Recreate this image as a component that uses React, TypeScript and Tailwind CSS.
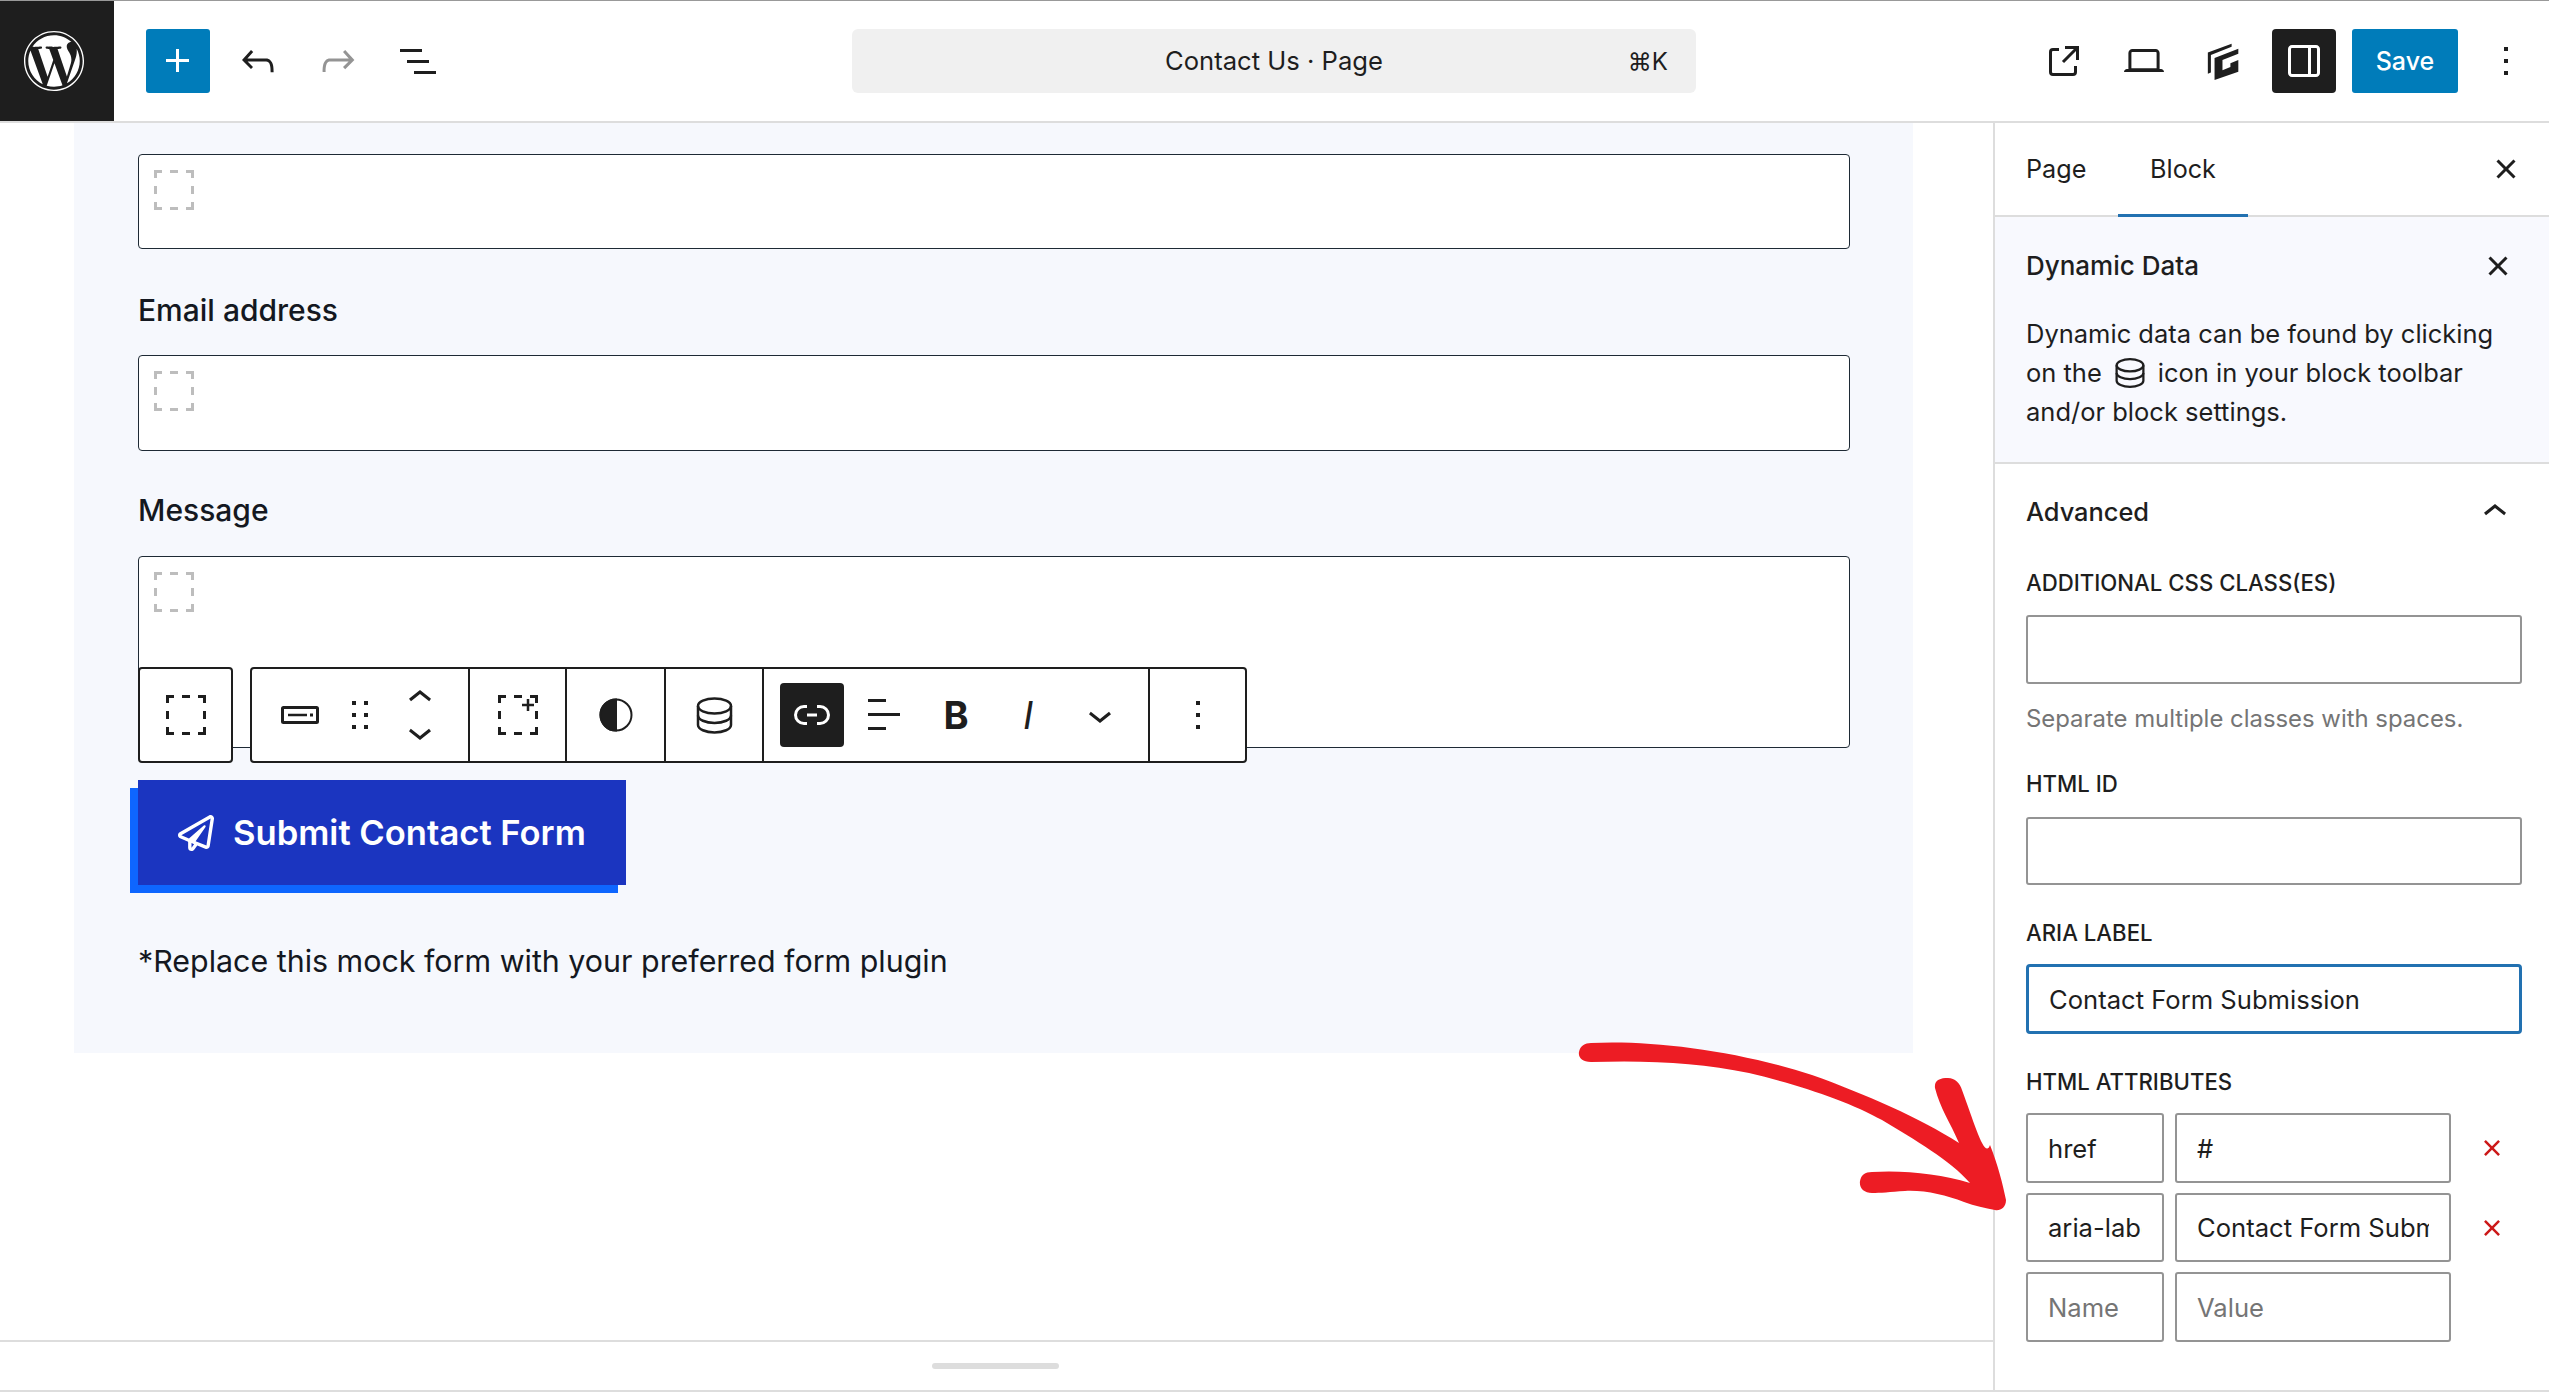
import { FaRegPaperPlane, FaWordpress } from 'react-icons/fa';

const paths = {
    plus: 'M11 12.5V17.5H12.5V12.5H17.5V11H12.5V6H11V11H6V12.5H11Z',
    undo: 'M18.3 11.7c-.6-.6-1.4-.9-2.3-.9H6.7l2.9-3.3-1.1-1-4.5 5L8.5 16l1-1-2.7-2.7H16c.5 0 .9.2 1.3.5 1 1 1 3.4 1 4.5v.3h1.5v-.2c0-1.5 0-4.3-1.5-5.7z',
    redo: 'M15.6 6.5l-1.1 1 2.9 3.3H8c-.9 0-1.7.3-2.3.9-1.4 1.5-1.4 4.2-1.4 5.6v.2h1.5v-.3c0-1.1 0-3.5 1-4.5.3-.3.7-.5 1.3-.5h9.2L14.5 15l1.1 1.1 4.6-4.6-4.6-5z',
    list: 'M3 6h11v1.5H3V6Zm3.5 5.5h11V13h-11v-1.5ZM21 17H10v1.5h11V17Z',
    external: 'M19.5 4.5h-7V6h4.44l-5.97 5.97 1.06 1.06L18 7.06v4.44h1.5v-7Zm-13 1a2 2 0 0 0-2 2v10a2 2 0 0 0 2 2h10a2 2 0 0 0 2-2v-3H17v3a.5.5 0 0 1-.5.5h-10a.5.5 0 0 1-.5-.5v-10a.5.5 0 0 1 .5-.5h3V5.5h-3Z',
    laptop: 'M20.5 16h-.7V8c0-1.1-.9-2-2-2H6.2c-1.1 0-2 .9-2 2v8h-.7c-.8 0-1.5.7-1.5 1.5h20c0-.8-.7-1.5-1.5-1.5zM5.7 8c0-.3.2-.5.5-.5h11.6c.3 0 .5.2.5.5v7.6H5.7V8z',
    drawer: 'M18 4H6c-1.1 0-2 .9-2 2v12c0 1.1.9 2 2 2h12c1.1 0 2-.9 2-2V6c0-1.1-.9-2-2-2zM6 18.5a.5.5 0 0 1-.5-.5V6a.5.5 0 0 1 .5-.5h8v13H6Zm12.5-.5a.5.5 0 0 1-.5.5h-2.5v-13H18a.5.5 0 0 1 .5.5v12Z',
    more: 'M13 19h-2v-2h2v2zm0-6h-2v-2h2v2zm0-6h-2V5h2v2z',
    close: 'M12 13.06l3.712 3.713 1.061-1.06L13.061 12l3.712-3.712-1.06-1.06L12 10.938 8.288 7.227l-1.061 1.06L10.939 12l-3.712 3.712 1.06 1.061L12 13.061z',
    up: 'M6.5 12.4L12 8l5.5 4.4-.9 1.2L12 10l-4.5 3.6-1-1.2z',
    down: 'M17.5 11.6L12 16l-5.5-4.4.9-1.2L12 14l4.5-3.6 1 1.2z',
    drag: 'M8 7h2V5H8v2zm0 6h2v-2H8v2zm0 6h2v-2H8v2zm6-14v2h2V5h-2zm0 8h2v-2h-2v2zm0 6h2v-2h-2v2z',
    align: 'M13 5.5H4V4h9v1.5Zm7 7H4V11h16v1.5Zm-7 7H4V18h9v1.5Z',
};

function WpIcon({ d, size = 48, className = 'text-[#1e1e1e]' }: { d: string; size?: number; className?: string }) {
    return (
        <svg width={size} height={size} viewBox="0 0 24 24" fill="currentColor" className={className}>
            <path d={d} />
        </svg>
    );
}

function Dashed({ className = 'text-[#1e1e1e]', plus = false }: { className?: string; plus?: boolean }) {
    return (
        <svg width="40" height="40" viewBox="0 0 40 40" fill="none" stroke="currentColor" strokeWidth="3" className={className}>
            <path d="M1.5 8V1.5H8M16 1.5h8M32 1.5h6.5V8M1.5 16v8M38.5 16v8M1.5 32v6.5H8M16 38.5h8M32 38.5h6.5V32" />
            {plus && <path d="M30 4v12M24 10h12" strokeWidth="2.5" stroke="#1e1e1e" />}
        </svg>
    );
}

function Database({ size = 36, strokeWidth = 2.5 }: { size?: number; strokeWidth?: number }) {
    return (
        <svg width={size} height={size} viewBox="0 0 36 37" fill="none" stroke="currentColor" strokeWidth={strokeWidth}>
            <ellipse cx="18" cy="9" rx="16.5" ry="7.5" />
            <path d="M1.5 9v19c0 4 7.4 7.5 16.5 7.5s16.5-3.5 16.5-7.5V9" />
            <path d="M1.5 18.5c0 4 7.4 7.5 16.5 7.5s16.5-3.5 16.5-7.5" />
        </svg>
    );
}

function GenerateLogo() {
    return (
        <svg width="70" height="60" viewBox="0 0 210 180" fill="#1e1e1e">
            <path d="M52 62L130 33V43L62 70V128L52 132Z" />
            <path d="M74 80L152 50V66L100 87V120L126 110V97L152 87V125L74 152Z" />
        </svg>
    );
}

function HeaderBtn({ children }: { children: React.ReactNode }) {
    return <div className="w-16 h-16 rounded-[4px] flex items-center justify-center shrink-0">{children}</div>;
}

function Header() {
    return (
        <header className="h-[123px] shrink-0 border-t border-[#999] border-b-2 border-b-[#ddd] bg-white flex">
            <div className="w-[114px] h-full bg-[#1e1e1e] flex items-center justify-center pr-[6px] text-white">
                <FaWordpress size={62} />
            </div>
            <div className="w-[738px] flex items-center gap-4 pl-8">
                <div className="w-16 h-16 rounded-[3px] bg-[#007cba] flex items-center justify-center">
                    <WpIcon d={paths.plus} className="text-white" />
                </div>
                <HeaderBtn><WpIcon d={paths.undo} /></HeaderBtn>
                <HeaderBtn><WpIcon d={paths.redo} className="text-[#949494]" /></HeaderBtn>
                <HeaderBtn><WpIcon d={paths.list} /></HeaderBtn>
            </div>
            <div className="w-[844px] flex items-center">
                <div className="w-full h-16 rounded-[6px] bg-[#f0f0f0] flex items-center relative pt-px">
                    <span className="w-full text-center text-[25.6px] text-[#1e1e1e]">Contact Us · Page</span>
                    <span className="absolute right-7 text-[24px] text-[#1e1e1e]">⌘K</span>
                </div>
            </div>
            <div className="flex-1 flex items-center justify-end gap-4 pr-[11px]">
                <HeaderBtn><WpIcon d={paths.external} /></HeaderBtn>
                <HeaderBtn><WpIcon d={paths.laptop} /></HeaderBtn>
                <HeaderBtn><GenerateLogo /></HeaderBtn>
                <div className="w-16 h-16 rounded-[4px] bg-[#1e1e1e] flex items-center justify-center">
                    <WpIcon d={paths.drawer} className="text-white" />
                </div>
                <div className="w-[106px] h-16 rounded-[3px] bg-[#007cba] flex items-center justify-center pt-px text-white text-[25px] font-medium">Save</div>
                <HeaderBtn><WpIcon d={paths.more} /></HeaderBtn>
            </div>
        </header>
    );
}

function Toolbar() {
    return (
        <div className="absolute left-0 top-[513px] flex gap-[17px] h-[96px]">
            <div className="w-[95px] bg-white border-2 border-[#1e1e1e] rounded-[4px] flex items-center justify-center">
                <Dashed />
            </div>
            <div className="w-[997px] bg-white border-2 border-[#1e1e1e] rounded-[4px] flex">
                <div className="w-[218px] flex items-center pl-[17px] border-r-2 border-[#1e1e1e] shrink-0">
                    <div className="w-[60px] flex justify-center pl-px">
                        <svg width="38" height="18" viewBox="0 0 38 18" fill="none" stroke="#1e1e1e" strokeWidth="3">
                            <rect x="1.5" y="1.5" width="35" height="15" rx="1" />
                            <path d="M7 9h19" strokeWidth="2.5" />
                            <path d="M29 9h3" strokeWidth="3" />
                        </svg>
                    </div>
                    <div className="w-[60px] flex justify-center pl-px"><WpIcon d={paths.drag} size={48} /></div>
                    <div className="w-[60px] flex flex-col items-center gap-[2px] pl-px">
                        <WpIcon d={paths.up} size={48} className="text-[#1e1e1e] -mb-[12px] -mt-[14px]" />
                        <WpIcon d={paths.down} size={48} className="text-[#1e1e1e] -mb-[14px] -mt-[4px]" />
                    </div>
                </div>
                <div className="w-[97px] flex items-center justify-center border-r-2 border-[#1e1e1e] shrink-0">
                    <Dashed plus />
                </div>
                <div className="w-[99px] flex items-center justify-center border-r-2 border-[#1e1e1e] shrink-0">
                    <svg width="34" height="34" viewBox="0 0 34 34" fill="none" stroke="#1e1e1e" strokeWidth="2">
                        <circle cx="17" cy="17" r="15.5" />
                        <path d="M17 1.5a15.5 15.5 0 0 0 0 31Z" fill="#1e1e1e" />
                    </svg>
                </div>
                <div className="w-[98px] flex items-center justify-center border-r-2 border-[#1e1e1e] shrink-0 text-[#1e1e1e]">
                    <Database size={37} />
                </div>
                <div className="w-[386px] flex items-center gap-2 pl-4 border-r-2 border-[#1e1e1e] shrink-0 text-[#1e1e1e]">
                    <div className="w-16 h-16 rounded-[4px] bg-[#1e1e1e] flex items-center justify-center">
                        <svg width="36" height="20" viewBox="0 0 36 20" fill="none" stroke="white" strokeWidth="3">
                            <path d="M13 1.5H10a8.5 8.5 0 0 0 0 17h3M23 1.5h3a8.5 8.5 0 0 1 0 17h-3M13 10h10" />
                        </svg>
                    </div>
                    <div className="w-16 flex justify-center"><WpIcon d={paths.align} /></div>
                    <div className="w-16 flex justify-center text-[38px] leading-none font-bold">B</div>
                    <div className="w-16 flex justify-center text-[38px] leading-none italic font-normal">I</div>
                    <div className="w-16 flex justify-center"><WpIcon d={paths.down} /></div>
                </div>
                <div className="flex-1 flex items-center justify-center"><WpIcon d={paths.more} /></div>
            </div>
        </div>
    );
}

function FieldBox({ height }: { height: string }) {
    return (
        <div className={`w-[1712px] ${height} bg-white border border-[#1e2a35] rounded-[4px] pl-[15px] pt-[15px]`}>
            <Dashed className="text-[#bdbdbd]" />
        </div>
    );
}

function Main() {
    return (
        <main className="flex-1 flex flex-col min-w-0">
            <div className="ml-[74px] w-[1839px] h-[930px] bg-[#f6f8fd] pt-[31px] px-16 shrink-0">
                <div className="relative">
                    <FieldBox height="h-[95px]" />
                    <div className="mt-[41px] h-10 flex items-center text-[30px] font-medium text-[#141821]">Email address</div>
                    <div className="mt-[25px]"><FieldBox height="h-[96px]" /></div>
                    <div className="mt-[39px] h-10 flex items-center text-[30px] font-medium text-[#141821]">Message</div>
                    <div className="mt-[26px]"><FieldBox height="h-[192px]" /></div>
                    <div className="mt-8 w-[488px] h-[105px] bg-[#1b35c0] shadow-[-8px_8px_0_#0e66ff] flex items-center gap-[19px] pl-10 text-white text-[34.6px] font-semibold">
                        <FaRegPaperPlane size={36} />
                        <span>Submit Contact Form</span>
                    </div>
                    <div className="mt-[57px] h-10 flex items-center text-[30.4px] text-[#141821]">*Replace this mock form with your preferred form plugin</div>
                    <Toolbar />
                </div>
            </div>
            <div className="flex-1" />
            <div className="h-[50px] border-t-2 border-[#ddd] flex items-center justify-center">
                <div className="w-[127px] h-[6px] rounded-full bg-[#ddd] mr-[3px]" />
            </div>
        </main>
    );
}

function FieldLabel({ children, className }: { children: React.ReactNode; className: string }) {
    return <div className={`h-[30px] flex items-center text-[22.2px] font-medium text-[#1e1e1e] ${className}`}>{children}</div>;
}

function AttrInput({ width, value, placeholder }: { width: string; value?: string; placeholder?: string }) {
    return (
        <input
            readOnly
            value={value ?? ''}
            placeholder={placeholder}
            className={`${width} h-full bg-white border-2 border-[#949494] rounded-[3px] pl-[20px] pr-[20px] text-[25.6px] text-[#1e1e1e] placeholder:text-[#757575] outline-none`}
        />
    );
}

function Sidebar() {
    return (
        <aside className="w-[556px] shrink-0 border-l-2 border-[#ddd] bg-white flex flex-col">
            <div className="h-[94px] shrink-0 border-b-2 border-[#ddd] flex relative text-[25.2px] text-[#1e1e1e]">
                <div className="w-[123px] pl-[31px] pt-[2px] flex items-center">Page</div>
                <div className="w-[130px] h-[94px] flex items-center justify-center pt-[2px] border-b-[3px] border-[#2271b1]">Block</div>
                <div className="absolute right-[19px] top-[22px]"><WpIcon d={paths.close} /></div>
            </div>
            <div className="h-[247px] shrink-0 bg-[#f8f9fe] border-b-2 border-[#ddd] pl-[31px] pr-5 pt-[28px] text-[#1e1e1e] relative">
                <div className="h-10 flex items-center text-[26px] font-medium">Dynamic Data</div>
                <div className="absolute right-[27px] top-[25px]"><WpIcon d={paths.close} /></div>
                <div className="mt-[29px] text-[25.5px] leading-[39px]">
                    <div>Dynamic data can be found by clicking</div>
                    <div className="flex items-center">on the<span className="mx-[13px]"><Database size={30} strokeWidth={2.8} /></span>icon in your block toolbar</div>
                    <div>and/or block settings.</div>
                </div>
            </div>
            <div className="flex-1 pl-[31px] pr-[27px] pt-[28px] flex flex-col">
                <div className="h-10 flex items-center justify-between text-[25.4px] font-medium text-[#1e1e1e] pr-[3px]">
                    Advanced
                    <div className="w-12 h-12"><WpIcon d={paths.up} /></div>
                </div>
                <FieldLabel className="mt-[36px]">ADDITIONAL CSS CLASS(ES)</FieldLabel>
                <input readOnly className="mt-[17px] w-full h-[69px] shrink-0 border-2 border-[#949494] rounded-[3px] outline-none" />
                <div className="mt-5 h-[30px] flex items-center text-[23.9px] text-[#757575]">Separate multiple classes with spaces.</div>
                <FieldLabel className="mt-[35px]">HTML ID</FieldLabel>
                <input readOnly className="mt-[18px] w-full h-[68px] shrink-0 border-2 border-[#949494] rounded-[3px] outline-none" />
                <FieldLabel className="mt-[33px]">ARIA LABEL</FieldLabel>
                <input
                    readOnly
                    value="Contact Form Submission"
                    className="mt-4 w-full h-[70px] shrink-0 border-[3px] border-[#2271b1] rounded-[4px] pl-5 text-[25.6px] text-[#1e1e1e] outline-none"
                />
                <FieldLabel className="mt-[33px]">HTML ATTRIBUTES</FieldLabel>
                <div className="mt-4 flex flex-col gap-[10px]">
                    <div className="h-[70px] flex items-center gap-[11px]">
                        <AttrInput width="w-[138px]" value="href" />
                        <AttrInput width="w-[276px]" value="#" />
                        <div className="ml-[10px]"><WpIcon d={paths.close} size={40} className="text-[#cc1818]" /></div>
                    </div>
                    <div className="h-[69px] flex items-center gap-[11px]">
                        <AttrInput width="w-[138px]" value="aria-label" />
                        <AttrInput width="w-[276px]" value="Contact Form Submission" />
                        <div className="ml-[10px]"><WpIcon d={paths.close} size={40} className="text-[#cc1818]" /></div>
                    </div>
                    <div className="h-[70px] flex items-center gap-[11px]">
                        <AttrInput width="w-[138px]" placeholder="Name" />
                        <AttrInput width="w-[276px]" placeholder="Value" />
                    </div>
                </div>
            </div>
        </aside>
    );
}

export default function App() {
    return (
        <div className="relative w-[2549px] h-[1395px] overflow-hidden bg-white flex flex-col font-['Inter',sans-serif]">
            <Header />
            <div className="h-[1269px] flex border-b-2 border-[#ddd] shrink-0">
                <Main />
                <Sidebar />
            </div>
            {/* red annotation arrow drawn over the page */}
            <svg className="absolute left-[1570px] top-[1035px]" width="445" height="185" viewBox="1570 1035 445 185" fill="#ed1c24">
                <path d="M1591 1043C1650 1040 1735 1050 1812 1075C1865 1094 1920 1118 1959 1143C1950 1122 1940 1108 1935 1088C1934 1080 1940 1078 1948 1078C1955 1078 1960 1083 1962 1090C1975 1125 1985 1160 1990 1145C1998 1165 2003 1185 2006 1200C2006 1208 2000 1211 1995 1210C1985 1208 1975 1206 1964 1202C1945 1195 1925 1190 1905 1191C1890 1192 1880 1193 1872 1193C1864 1193 1859 1188 1860 1181C1861 1175 1865 1172 1872 1172C1905 1170 1940 1174 1970 1183C1950 1160 1915 1140 1882 1120C1850 1102 1800 1085 1749 1073C1700 1063 1650 1060 1591 1062C1582 1062 1578 1057 1579 1052C1580 1046 1585 1043 1591 1043Z" />
            </svg>
        </div>
    );
}
